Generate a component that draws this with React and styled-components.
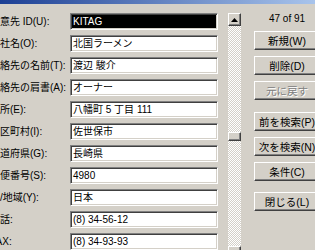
import React from 'react';
import styled, { createGlobalStyle } from 'styled-components';

const GlobalStyle = createGlobalStyle`
    html, body {
        margin: 0;
        padding: 0;
        background: #d4d0c8;
        overflow: hidden;
    }
    body {
        font-family: "Liberation Sans", "Noto Sans CJK JP", sans-serif;
        font-size: 10.5px;
        color: #000;
    }
`;

const fields = [
    { label: '得意先 ID(U):', value: 'KITAG', selected: true },
    { label: '会社名(O):', value: '北国ラーメン' },
    { label: '連絡先の名前(T):', value: '渡辺 駿介' },
    { label: '連絡先の肩書(A):', value: 'オーナー' },
    { label: '住所(E):', value: '八幡町 5 丁目 111' },
    { label: '市区町村(I):', value: '佐世保市' },
    { label: '都道府県(G):', value: '長崎県' },
    { label: '郵便番号(S):', value: '4980' },
    { label: '国/地域(Y):', value: '日本' },
    { label: '電話:', value: '(8) 34-56-12' },
    { label: 'FAX:', value: '(8) 34-93-93' },
];

class App extends React.Component {
    render() {
        return (
            <Window>
                <GlobalStyle />
                <TitleBar />
                <Content>
                    <Fields>
                        {fields.map((f) => (
                            <React.Fragment key={f.label}>
                                <Label>{f.label}</Label>
                                <Field $selected={f.selected}>{f.value}</Field>
                            </React.Fragment>
                        ))}
                    </Fields>

                    <ScrollBar>
                        <ArrowButton>
                            <svg width="7" height="4" viewBox="0 0 7 4">
                                <polygon points="3.5,0 7,4 0,4" fill="#000" />
                            </svg>
                        </ArrowButton>
                        <Track $offset={106}>
                            <Thumb />
                        </Track>
                        <ArrowButton>
                            <svg width="7" height="4" viewBox="0 0 7 4">
                                <polygon points="0,0 7,0 3.5,4" fill="#000" />
                            </svg>
                        </ArrowButton>
                    </ScrollBar>

                    <Side>
                        <Counter>47 of 91</Counter>
                        <ButtonGroup>
                            <Button>新規(W)</Button>
                            <Button>削除(D)</Button>
                            <Button disabled>元に戻す</Button>
                        </ButtonGroup>
                        <ButtonGroup $top={12}>
                            <Button>前を検索(P)</Button>
                            <Button>次を検索(N)</Button>
                            <Button>条件(C)</Button>
                        </ButtonGroup>
                        <ButtonGroup $top={11}>
                            <Button>閉じる(L)</Button>
                        </ButtonGroup>
                    </Side>
                </Content>
            </Window>
        );
    }
}

const Window = styled.div`
    width: 315px;
    height: 250px;
    overflow: hidden;
    background: #d4d0c8;
`;

const TitleBar = styled.div`
    height: 4px;
    background: linear-gradient(to right, #1c3f94, #a8c4ec);
`;

const Content = styled.div`
    display: flex;
    align-items: flex-start;
    padding-top: 9px;
`;

const Fields = styled.div`
    display: grid;
    grid-template-columns: 80px 148px;
    row-gap: 5px;
    margin-left: -10px;
    flex-shrink: 0;
`;

const Label = styled.div`
    align-self: center;
    white-space: nowrap;
    font-size: 10px;
    line-height: 17px;
`;

const Field = styled.div`
    box-sizing: border-box;
    height: 17px;
    padding: 0 1px 0 2px;
    border-top: 1px solid #808080;
    border-left: 1px solid #808080;
    border-bottom: 1px solid #ffffff;
    border-right: 1px solid #ffffff;
    box-shadow: inset 1px 1px #404040, inset -1px -1px #d4d0c8;
    background: ${(p) => (p.$selected ? '#000' : '#fff')};
    color: ${(p) => (p.$selected ? '#fff' : '#000')};
    font-size: 10px;
    line-height: 15px;
    white-space: nowrap;
    overflow: hidden;
`;

const ScrollBar = styled.div`
    display: flex;
    flex-direction: column;
    width: 13px;
    margin-left: 10px;
    flex-shrink: 0;
`;

const ArrowButton = styled.div`
    box-sizing: border-box;
    height: 13px;
    display: flex;
    align-items: center;
    justify-content: center;
    background: #d4d0c8;
    border-top: 1px solid #fff;
    border-left: 1px solid #fff;
    border-right: 1px solid #404040;
    border-bottom: 1px solid #404040;
    box-shadow: inset -1px -1px #808080;
`;

const Track = styled.div`
    height: 220px;
    box-sizing: border-box;
    padding-top: ${(p) => p.$offset}px;
    background: repeating-conic-gradient(#d4d0c8 0 25%, #ffffff 0 50%) 0 0 / 2px 2px;
`;

const Thumb = styled.div`
    box-sizing: border-box;
    height: 9px;
    background: #d4d0c8;
    border-top: 1px solid #fff;
    border-left: 1px solid #fff;
    border-right: 1px solid #404040;
    border-bottom: 1px solid #404040;
    box-shadow: inset -1px -1px #808080;
`;

const Side = styled.div`
    display: flex;
    flex-direction: column;
    width: 66px;
    margin-left: 13px;
    flex-shrink: 0;
`;

const Counter = styled.div`
    height: 12px;
    line-height: 12px;
    margin-bottom: 6px;
    font-size: 10px;
    text-align: center;
    white-space: nowrap;
`;

const ButtonGroup = styled.div`
    display: flex;
    flex-direction: column;
    gap: 6px;
    margin-top: ${(p) => p.$top || 0}px;
`;

const Button = styled.button`
    box-sizing: border-box;
    height: 19px;
    width: 66px;
    padding: 0;
    font: inherit;
    white-space: nowrap;
    color: #000;
    background: #d4d0c8;
    border-top: 1px solid #fff;
    border-left: 1px solid #fff;
    border-right: 1px solid #404040;
    border-bottom: 1px solid #404040;
    box-shadow: inset -1px -1px #808080;

    &:disabled {
        color: #808080;
        text-shadow: 1px 1px #fff;
    }
`;

export default App;
